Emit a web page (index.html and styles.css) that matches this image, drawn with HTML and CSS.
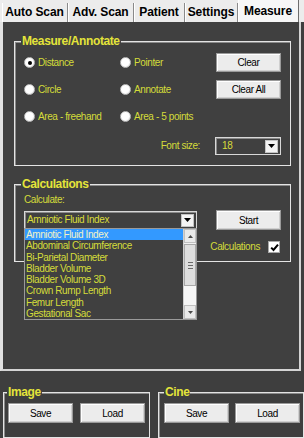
FILE: index.html
```html
<!DOCTYPE html>
<html>
<head>
<meta charset="utf-8">
<link rel="stylesheet" href="styles.css">
</head>
<body>
<div class="app">
  <div class="tabs">
    <div class="tab t1">Auto Scan</div>
    <div class="tab t2">Adv. Scan</div>
    <div class="tab t3">Patient</div>
    <div class="tab t4">Settings</div>
    <div class="tab t5 active">Measure</div>
  </div>
  <div class="frame">
    <div class="page">
      <fieldset class="grp measure">
        <legend>Measure/Annotate</legend>
        <div class="mgrid">
          <div class="radio"><span class="dot checked"></span>Distance</div>
          <div class="radio"><span class="dot"></span>Pointer</div>
          <button class="btn">Clear</button>
          <div class="radio"><span class="dot"></span>Circle</div>
          <div class="radio"><span class="dot"></span>Annotate</div>
          <button class="btn">Clear All</button>
          <div class="radio"><span class="dot"></span>Area - freehand</div>
          <div class="radio"><span class="dot"></span>Area - 5 points</div>
          <span class="empty"></span>
          <span class="fs-label">Font size:</span>
          <div class="combo fs-combo"><span class="val">18</span><span class="arrow"><svg width="7" height="4" viewBox="0 0 7 4"><path d="M0 0h7L3.5 4z" fill="#000"/></svg></span></div>
        </div>
      </fieldset>
      <fieldset class="grp calc">
        <legend>Calculations</legend>
        <div class="cgrid">
          <span class="lbl">Calculate:</span>
          <span class="empty"></span>
          <div class="combo calc-combo">
            <span class="val">Amniotic Fluid Index</span>
            <span class="arrow"><svg width="7" height="4" viewBox="0 0 7 4"><path d="M0 0h7L3.5 4z" fill="#000"/></svg></span>
            <div class="list">
              <ul class="items">
                <li class="sel">Amniotic Fluid Index</li>
                <li>Abdominal Circumference</li>
                <li>Bi-Parietal Diameter</li>
                <li>Bladder Volume</li>
                <li>Bladder Volume 3D</li>
                <li>Crown Rump Length</li>
                <li>Femur Length</li>
                <li>Gestational Sac</li>
              </ul>
              <div class="sb">
                <div class="sbbtn"><svg width="5" height="3" viewBox="0 0 5 3"><path d="M0 3h5L2.5 0z" fill="#4a4a4a"/></svg></div>
                <div class="thumb"><span></span><span></span><span></span></div>
                <div class="track"></div>
                <div class="sbbtn"><svg width="5" height="3" viewBox="0 0 5 3"><path d="M0 0h5L2.5 3z" fill="#4a4a4a"/></svg></div>
              </div>
            </div>
          </div>
          <button class="btn">Start</button>
          <div class="chkrow">
            <span class="lbl">Calculations</span>
            <span class="chk"><svg width="9" height="9" viewBox="0 0 9 9"><path d="M1.2 4.6l2.3 2.4L8 1.6" stroke="#000" stroke-width="2" fill="none"/></svg></span>
          </div>
        </div>
      </fieldset>
    </div>
  </div>
  <div class="bottom">
    <fieldset class="grp small image">
      <legend>Image</legend>
      <div class="brow">
        <button class="btn">Save</button>
        <button class="btn">Load</button>
      </div>
    </fieldset>
    <fieldset class="grp small cine">
      <legend>Cine</legend>
      <div class="brow cine-row">
        <button class="btn">Save</button>
        <button class="btn">Load</button>
      </div>
    </fieldset>
  </div>
</div>
</body>
</html>
```

FILE: styles.css
```css
* { box-sizing: border-box; }
html, body { margin: 0; padding: 0; }
body {
  width: 304px;
  height: 438px;
  overflow: hidden;
  background: #3e3e3e;
  font-family: "Liberation Sans", Arial, sans-serif;
  font-size: 10px;
  letter-spacing: -0.4px;
}
.app { width: 304px; }

/* tabs */
.tabs {
  height: 22px;
  background: #ececec;
  display: flex;
  align-items: flex-end;
  padding-left: 2px;
}
.tab {
  height: 19px;
  line-height: 19px;
  font-size: 12px;
  font-weight: bold;
  letter-spacing: -0.1px;
  color: #000;
  text-align: center;
  border-right: 1px solid #8a8a8a;
  box-shadow: inset 1px 0 0 #ffffff;
  background: #ececec;
}
.t1 { width: 66px; }
.t2 { width: 66px; }
.t3 { width: 51px; }
.t4 { width: 53px; }
.t5 { width: 61px; }
.tab.active {
  height: 22px;
  line-height: 21px;
  padding-top: 1px;
  background: #f7f7f7;
  border-right: 1px solid #6e6e6e;
}

/* frame + page */
.frame {
  width: 301px;
  border-left: 3px solid #e2e2e2;
  border-right: 2px solid #d4d4d4;
  border-bottom: 2px solid #d4d4d4;
}
.page {
  position: relative;
  height: 347px;
  background: #404040;
  padding: 12px 0 0 11px;
}

/* group boxes */
.grp {
  margin: 0;
  border: 1px solid #e4e4e4;
  box-shadow: inset 1px 1px 0 #8a8a8a;
  min-width: 0;
}
.grp legend {
  padding: 0 1px;
  margin-left: -3px;
  height: 14px;
  line-height: 14px;
  font-size: 12px;
  font-weight: bold;
  color: #e4e43a;
  background: #404040;
  letter-spacing: -0.4px;
}
.measure {
  width: 277px;
  padding: 5px 9px 10px 9px;
}
.calc {
  width: 277px;
  margin-top: 11px;
  padding: 3px 9px 7px 9px;
}

/* measure grid */
.mgrid {
  display: grid;
  grid-template-columns: 96px 96px 65px;
  grid-template-rows: 19px 19px 19px 21px;
  row-gap: 8px;
  align-items: center;
}
.radio {
  display: flex;
  align-items: center;
  gap: 3px;
  color: #d4dc3a;
  white-space: nowrap;
  line-height: 12px;
}
.dot {
  width: 11px;
  height: 11px;
  border-radius: 50%;
  background: radial-gradient(circle at 40% 35%, #ffffff 55%, #dcdcdc 100%);
  border: 1px solid #bdbdbd;
  display: inline-flex;
  align-items: center;
  justify-content: center;
  flex: none;
}
.dot.checked::after {
  content: "";
  width: 4px;
  height: 4px;
  border-radius: 50%;
  background: #000;
}
.btn {
  height: 19px;
  width: 65px;
  padding: 0;
  margin: 0;
  font-family: "Liberation Sans", Arial, sans-serif;
  font-size: 10px;
  letter-spacing: -0.4px;
  color: #000;
  background: #ececec;
  border: 1px solid #9a9a9a;
  box-shadow: inset 1px 1px 0 #ffffff, inset -1px -1px 0 #cfcfcf;
  border-radius: 0;
}
.fs-label {
  grid-column: 1 / 3;
  justify-self: end;
  margin-right: 16px;
  color: #d4dc3a;
  align-self: end;
  line-height: 12px;
  margin-bottom: 3px;
}
.fs-combo {
  align-self: end;
  height: 18px;
  width: 66px;
  margin-left: -1px;
}

/* combo */
.combo {
  position: relative;
  display: flex;
  align-items: center;
  background: #404040;
  border: 1px solid #d8d8d8;
  box-shadow: inset 1px 1px 0 #8a8a8a;
  padding: 2px 2px 2px 0;
}
.combo .val {
  flex: 1;
  color: #d8dc3a;
  padding-left: 6px;
  line-height: 12px;
  white-space: nowrap;
}
.combo .arrow {
  width: 13px;
  height: 13px;
  background: #f4f4f4;
  border: 1px solid #c4c4c4;
  display: flex;
  align-items: center;
  justify-content: center;
}

/* calc grid */
.cgrid {
  display: grid;
  grid-template-columns: 173px 65px;
  grid-template-rows: 12px 20px 20px;
  column-gap: 19px;
  row-gap: 4px;
}
.lbl {
  color: #d4dc3a;
  line-height: 12px;
  white-space: nowrap;
}
.cgrid .btn { height: 20px; }
.calc-combo {
  height: 18px;
  align-self: center;
}
.calc-combo .val { padding-left: 2px; }
.chkrow {
  grid-column: 1 / 3;
  align-self: end;
  height: 14px;
  display: flex;
  align-items: center;
  justify-content: flex-end;
  gap: 8px;
  padding-right: 1px;
}
.chk {
  width: 12px;
  height: 12px;
  background: #fff;
  border: 1px solid #a8a8a8;
  display: flex;
  align-items: center;
  justify-content: center;
}

/* dropdown list */
.list {
  position: absolute;
  left: -1px;
  top: 100%;
  width: 173px;
  height: 92px;
  z-index: 2;
  background: #404040;
  border: 1px solid #9a9a9a;
  display: flex;
}
.items {
  list-style: none;
  margin: 0;
  padding: 0;
  flex: 1;
}
.items li {
  height: 11.3px;
  line-height: 11.3px;
  padding-left: 1px;
  color: #d4dc3a;
  white-space: nowrap;
}
.items li.sel {
  background: #3399ff;
  color: #f2f2c4;
}
.sb {
  width: 13px;
  display: flex;
  flex-direction: column;
  background: #f0f0f0;
  border-left: 1px solid #d0d0d0;
}
.sbbtn {
  height: 14px;
  display: flex;
  align-items: center;
  justify-content: center;
  background: #eaeaea;
  border: 1px solid #c0c0c0;
}
.thumb {
  height: 42px;
  margin-top: 1px;
  background: #dedede;
  border: 1px solid #a8a8a8;
  display: flex;
  flex-direction: column;
  align-items: center;
  justify-content: center;
  gap: 2px;
}
.thumb span {
  width: 5px;
  height: 1px;
  background: #6a6a6a;
}
.track { flex: 1; background: #f6f6f6; }

/* bottom */
.bottom {
  height: 67px;
  display: flex;
  gap: 8px;
  padding: 14px 0 0 3px;
  background: #3e3e3e;
}
.bottom .grp legend { background: #3e3e3e; margin-left: -1px; }
.bottom .cine legend { margin-left: 0; }
.small { padding: 4px 4px 8px 4px; }
.image { width: 147px; }
.cine { width: 146px; padding-left: 5px; padding-right: 2px; }
.brow {
  display: flex;
  gap: 7px;
}
.cine-row { gap: 6px; }
.brow .btn { height: 20px; }
```
